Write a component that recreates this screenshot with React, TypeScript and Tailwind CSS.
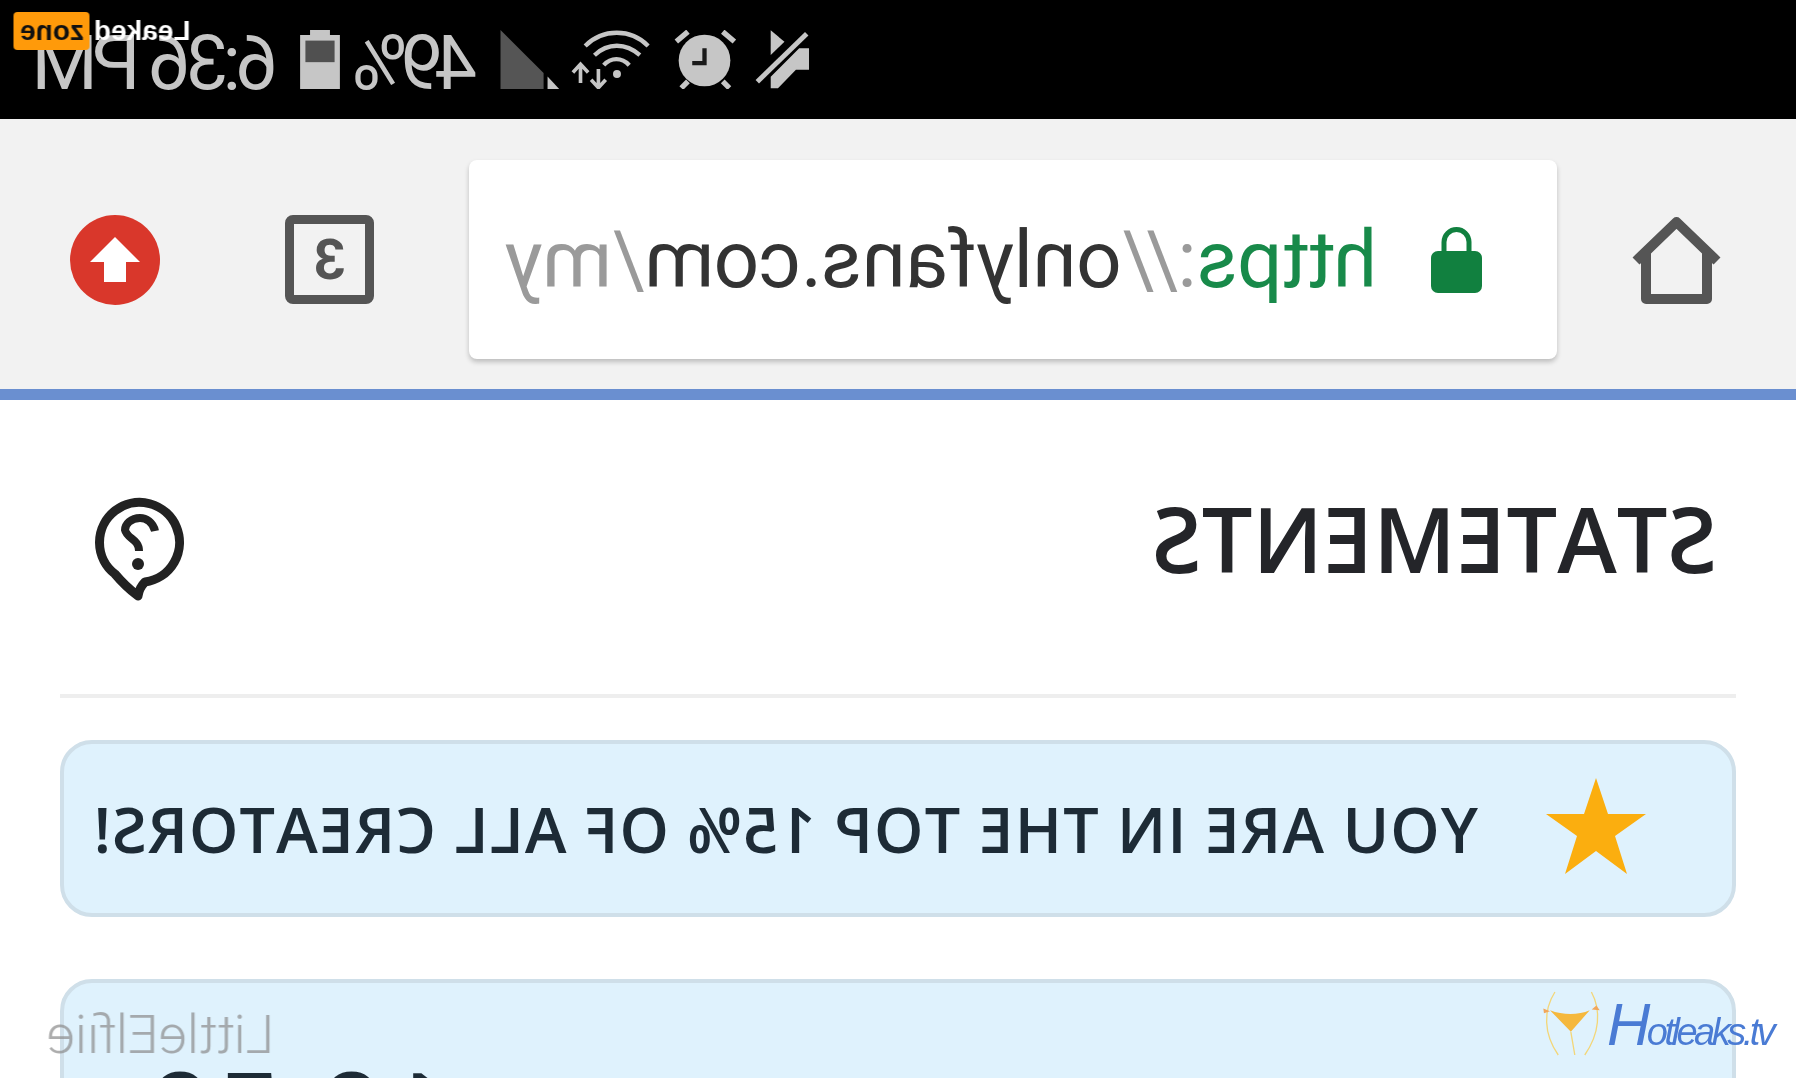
const mono = "font-['Roboto',sans-serif]";

// the shot is mirrored: status icons are drawn as seen, so they flip back inside the flipped page
function BatteryIcon() {
  return (
    <svg viewBox="28 30 120 178" className="h-[59px] w-10 -scale-x-100">
      <path d="M58 30h60v15h30v163H28V45h30z" fill="#c6c6c6" />
      <rect x="44" y="62" width="88" height="65" fill="#505050" />
    </svg>
  );
}

function SignalIcon() {
  return (
    <svg viewBox="28 30 178 178" className="h-[59px] w-[60px] -scale-x-100">
      <path d="M28 30L158 160V208H28Z" fill="#555555" />
      <path d="M170 170L205 208H170Z" fill="#c6c6c6" />
    </svg>
  );
}

function WifiIcon() {
  return (
    <svg viewBox="240 30 240 178" className="h-[59px] w-[80px] -scale-x-100" fill="none" stroke="#c6c6c6" strokeWidth="13">
      <path d="M282 78C335 25 420 25 472 78" />
      <path d="M310 106C350 68 405 68 447 106" />
      <path d="M338 136C360 112 392 112 415 136" />
      <circle cx="378" cy="163" r="12" fill="#c6c6c6" stroke="none" />
      <path d="M268 190V135M245 158l23-25 23 25" strokeWidth="11" />
      <path d="M322 148V202M300 180l22 24 22-24" strokeWidth="11" />
    </svg>
  );
}

function AlarmIcon() {
  return (
    <svg viewBox="540 30 190 178" className="h-[59px] w-[63px] -scale-x-100">
      <circle cx="635" cy="122" r="78" fill="#c6c6c6" />
      <path d="M550 65L585 35M690 35L725 65M565 205L585 185M710 205L690 185" stroke="#c6c6c6" strokeWidth="16" />
      <path d="M635 85V130H598" fill="none" stroke="#1a1a1a" strokeWidth="13" />
    </svg>
  );
}

function MuteIcon() {
  return (
    <svg viewBox="790 30 168 178" className="h-[59px] w-[55px] -scale-x-100">
      <path d="M838 30L880 65 838 105Z" fill="#c6c6c6" />
      <path d="M838 172L925 85H955V150H915L860 207H838Z" fill="#c6c6c6" />
      <path d="M797 187L948 40" stroke="#c6c6c6" strokeWidth="15" />
    </svg>
  );
}

function StatusBar() {
  return (
    <div className="flex h-[119px] items-center justify-end bg-black pr-[37px] text-[#c6c6c6]">
      <div className="flex items-center">
        <MuteIcon />
        <div className="ml-[19px]"><AlarmIcon /></div>
        <div className="ml-[22px]"><WifiIcon /></div>
        <div className="ml-[11px]"><SignalIcon /></div>
        <span className={`${mono} mt-[6px] ml-[23px] text-[76px] leading-none tracking-[-8px]`}>49%</span>
        <div className="ml-[20px]"><BatteryIcon /></div>
        <span className={`${mono} mt-[6px] ml-[22px] text-[76px] leading-none tracking-[-5.5px]`}>6:36 PM</span>
      </div>
    </div>
  );
}

function Toolbar() {
  return (
    <div className="h-[281px] border-b-[11px] border-[#6a8fd0] bg-[#f2f2f2] pt-[11px]">
      <div className="flex h-[259px] items-center">
        <svg viewBox="0 0 91 90" className="ml-[74px] h-[90px] w-[91px] shrink-0" fill="none" stroke="#555" strokeWidth="10">
          <path d="M5 46L45.500 7 86 46" strokeLinejoin="round" />
          <path d="M15 37V84H76V37" strokeLinejoin="round" />
        </svg>
        <div className="ml-[74px] flex h-[199px] w-[1088px] shrink-0 items-center rounded-lg bg-white pl-[75px] shadow-[0_3px_5px_rgba(0,0,0,0.22)]">
          <svg viewBox="0 0 51 66" className="h-[66px] w-[51px] shrink-0">
            <path d="M13 26V15a12.500 12.500 0 0 1 25 0v11" fill="none" stroke="#11803f" strokeWidth="5" />
            <rect y="24" width="51" height="42" rx="7" fill="#11803f" />
          </svg>
          <span className={`${mono} ml-[54px] text-[80px] leading-none tracking-[-0.5px]`}>
            <span className="text-[#188a4a]">https</span>
            <span className="text-[#9a9a9a]">://</span>
            <span className="text-[#333333]">onlyfans.com</span>
            <span className="text-[#9a9a9a]">/my</span>
          </span>
        </div>
        <div className="ml-[95px] flex h-[89px] w-[89px] shrink-0 items-center justify-center rounded-lg border-[9px] border-[#555555]">
          <span className={`${mono} text-[56px] leading-none font-bold text-[#555555]`}>3</span>
        </div>
        <div className="ml-[125px] flex h-[90px] w-[90px] shrink-0 items-center justify-center rounded-full bg-[#d9372b]">
          <svg viewBox="0 0 50 45" className="h-[45px] w-[50px]">
            <path d="M25 0L50 25H36V45H14V25H0Z" fill="#fff" />
          </svg>
        </div>
      </div>
    </div>
  );
}

export default function App() {
  return (
    <div className="relative h-[1078px] w-[1796px] overflow-hidden bg-white">
      <div className="h-full -scale-x-100 font-['Open_Sans',sans-serif]">
        <StatusBar />
        <Toolbar />
        <div className="px-[60px]">
          <div className="flex h-[298px] items-center justify-between border-b-[4px] border-[#eeeeee] pr-[35px] pl-[19px]">
            <h1 className="mt-[-18px] text-[90px] leading-none font-semibold text-[#242529]">STATEMENTS</h1>
            <svg viewBox="0 0 90 104" className="mt-[4px] h-[104px] w-[90px] -scale-x-100" fill="none">
              <path d="M50 85A40 40 0 1 0 20 77Q30 89 43 99Q44 91 50 85Z" stroke="#222" strokeWidth="9" strokeLinejoin="round" />
              <path d="M60 34C58 25 51 21 45 21C36 21 30 27 30 33C32 42 44 42 44 54" stroke="#222" strokeWidth="8" />
              <circle cx="43" cy="67" r="6" fill="#222" />
            </svg>
          </div>
          <div className="mt-[42px] flex h-[177px] items-center rounded-[32px] border-[4px] border-[#cfdfe9] bg-[#dff2fd]">
            <svg viewBox="0 0 100 96" className="mb-[6px] ml-[86px] h-[96px] w-[100px] shrink-0">
              <path d="M50 0L62 36H100L69 58 81 96 50 73 19 96 31 58 0 36H38Z" fill="#fbae0f" />
            </svg>
            <span className="ml-[68px] text-[63px] leading-none font-semibold tracking-[1px] whitespace-nowrap text-[#1d2b36]">
              YOU ARE IN THE TOP 15% OF ALL CREATORS!
            </span>
          </div>
          <div className="mt-[62px] flex h-[177px] items-start rounded-[32px] border-[4px] border-[#cfdfe9] bg-[#dff2fd] pt-[70px]">
            <span className="ml-[1276px] text-[122px] leading-none font-medium text-[#1d2b36]">10.50</span>
          </div>
        </div>
      </div>
      <div className="absolute top-[12px] left-[14px] flex -scale-x-100 items-center font-['Liberation_Sans',sans-serif] text-[28px] leading-none font-bold">
        <span className="mr-[4px] text-white">Leaked</span>
        <span className="flex h-[38px] w-[76px] items-center justify-center rounded-[4px] bg-[#ff9a0a] text-[#111]">zone</span>
      </div>
      <span className="absolute top-[1008px] left-[47px] -scale-x-100 font-['Roboto',sans-serif] text-[54px] leading-none font-light text-[#8a8a8a]/70">
        LittleElfiie
      </span>
      <div className="absolute top-[990px] left-[1540px] flex items-end">
        <svg viewBox="120 90 190 200" className="h-[67px] w-[63px] shrink-0" fill="none">
          <path d="M150 150C190 165 235 165 270 150L213 215Z" fill="#f5b83d" />
          <path d="M165 95C130 150 130 220 175 285M275 95C305 150 300 220 255 285M213 215L225 285" stroke="#f3d678" strokeWidth="4" />
          <path d="M130 145l20 8-18 6zM300 150l-24-2 14-12z" fill="#f2a65a" />
        </svg>
        <span className="mb-[2px] ml-[4px] font-['Liberation_Sans',sans-serif] leading-none tracking-[-3.5px] text-[#4a7bd4] italic">
          <span className="text-[60px]">H</span>
          <span className="text-[38px]">otleaks.tv</span>
        </span>
      </div>
    </div>
  );
}
